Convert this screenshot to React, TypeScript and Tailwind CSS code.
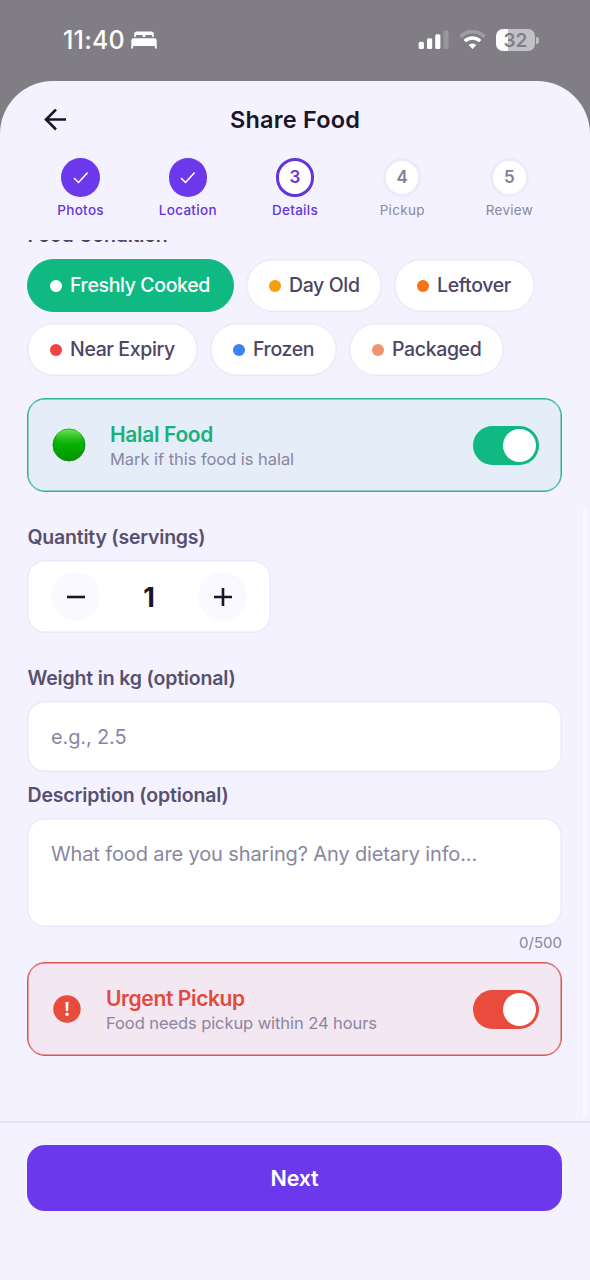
import { useState } from "react";

type Step = {
  label: string;
  state: "done" | "current" | "todo";
};

type Condition = {
  id: string;
  label: string;
  dot: string;
  width: string;
};

const steps: Step[] = [
  { label: "Photos", state: "done" },
  { label: "Location", state: "done" },
  { label: "Details", state: "current" },
  { label: "Pickup", state: "todo" },
  { label: "Review", state: "todo" }
];

const conditions: Condition[] = [
  { id: "fresh", label: "Freshly Cooked", dot: "bg-[#10b981]", width: "w-[207px]" },
  { id: "day-old", label: "Day Old", dot: "bg-[#f59e0b]", width: "w-[136px]" },
  { id: "leftover", label: "Leftover", dot: "bg-[#f97316]", width: "w-[141px]" },
  { id: "near-expiry", label: "Near Expiry", dot: "bg-[#ef4444]", width: "w-[171px]" },
  { id: "frozen", label: "Frozen", dot: "bg-[#3b82f6]", width: "w-[127px]" },
  { id: "packaged", label: "Packaged", dot: "bg-[#f0946f]", width: "w-[155px]" }
];

function StatusBar() {
  return (
    <div className="flex h-[81px] items-start justify-between pl-[63px] pr-[51px] pt-[26px] text-white">
      <div className="flex h-7 items-center">
        <span className="w-[68px] whitespace-nowrap pt-[2px] text-[25px] font-medium tracking-[0.2px]">11:40</span>
        <svg width="26" height="18" viewBox="0 0 26 18" fill="currentColor">
          <path d="M3.2 6V3a2.6 2.6 0 0 1 2.6-2.6h14.4A2.6 2.6 0 0 1 22.8 3v3h-1.6V5a1.2 1.2 0 0 0-1.2-1.1h-4.6a1.2 1.2 0 0 0-1.2 1.2V6h-2.4v-.9a1.2 1.2 0 0 0-1.2-1.2H6A1.2 1.2 0 0 0 4.8 5v1z" />
          <path d="M2.8 7.2h20.4A2.5 2.5 0 0 1 25.7 9.7v7.1a.9.9 0 0 1-1.8 0V15H2.1v1.8a.9.9 0 0 1-1.8 0V9.7A2.5 2.5 0 0 1 2.8 7.2z" />
        </svg>
      </div>
      <div className="flex h-7 items-center">
        <svg className="mr-[10px]" width="31" height="20" viewBox="0 0 31 20" fill="currentColor">
          <rect x="0.7" y="11.7" width="5.2" height="7.3" rx="1.5" />
          <rect x="9" y="8.3" width="5.2" height="10.7" rx="1.5" />
          <rect x="17.2" y="4.2" width="5.2" height="14.8" rx="1.5" />
          <rect x="25.4" y="0.4" width="5.2" height="18.6" rx="1.5" opacity="0.2" />
        </svg>
        <svg className="mr-[10px]" width="27" height="20" viewBox="0 0 27 20" fill="none" stroke="currentColor" strokeWidth="3.4">
          <path d="M1.5 6.7a17 17 0 0 1 24 0" opacity="0.25" />
          <path d="M5.8 11.1a11 11 0 0 1 15.4 0" />
          <path d="M9.6 15a5.6 5.6 0 0 1 7.8 0L13.5 18.9z" fill="currentColor" stroke="none" />
        </svg>
        <div className="flex h-[22px] w-[39px] items-center justify-center rounded-[7px] bg-[linear-gradient(90deg,#fff_0_12px,#c1c0c5_12px)] text-[19px] font-semibold leading-none text-[#807e84]">
          32
        </div>
        <div className="ml-px h-[7px] w-[3px] rounded-r-full bg-[#c1c0c5]" />
      </div>
    </div>
  );
}

function StepItem({ step, index }: { step: Step; index: number }) {
  const tone =
    step.state === "done"
      ? "bg-[#6c38ec] text-white"
      : step.state === "current"
        ? "border-[3px] border-[#6435da] bg-white text-[#6435da]"
        : "border-[3px] border-[#edeafb] bg-white text-[#827d98]";

  return (
    <div className="flex flex-1 flex-col items-center">
      <div className={`flex size-[38.5px] items-center justify-center rounded-full text-[17px] font-semibold ${tone}`}>
        {step.state === "done" ? (
          <svg width="16" height="13" viewBox="0 0 16 13" fill="none" stroke="currentColor" strokeWidth="1.6" strokeLinecap="round" strokeLinejoin="round">
            <path d="M1.5 7.5l4 4L14.2 2" />
          </svg>
        ) : (
          index + 1
        )}
      </div>
      <span
        className={`mt-[3px] whitespace-nowrap text-[13.5px] leading-[20px] tracking-[0.3px] ${
          step.state === "todo" ? "text-[#8a86a0]" : "font-medium text-[#6435da]"
        }`}
      >
        {step.label}
      </span>
    </div>
  );
}

function Toggle({ on, color, onToggle }: { on: boolean; color: string; onToggle: () => void }) {
  return (
    <button
      type="button"
      role="switch"
      aria-checked={on}
      onClick={onToggle}
      className={`flex h-[39px] w-[66px] items-center rounded-full px-[3px] ${on ? `justify-end ${color}` : "justify-start bg-gray-300"}`}
    >
      <span className="size-[33px] rounded-full bg-white" />
    </button>
  );
}

export default function App() {
  const [condition, setCondition] = useState("fresh");
  const [halal, setHalal] = useState(true);
  const [urgent, setUrgent] = useState(true);
  const [quantity, setQuantity] = useState(1);
  const [weight, setWeight] = useState("");
  const [description, setDescription] = useState("");

  return (
    <div className="h-[1280px] w-[590px] overflow-hidden bg-[#807e84] font-['Inter',sans-serif]">
      <StatusBar />
      <div className="relative flex h-[1199px] flex-col rounded-t-[53px] bg-[#f4f2ff]">
        <header className="grid h-[77px] shrink-0 grid-cols-[60px_1fr_60px] items-center px-[27px]">
          <button type="button" aria-label="Back" className="pl-[17px] text-[#1a1528]">
            <svg width="23" height="22" viewBox="0 0 23 22" fill="none" stroke="currentColor" strokeWidth="2.6">
              <path d="M12 0.5L2 10.5l10 10M2 10.5h20" />
            </svg>
          </button>
          <h1 className="text-center text-[23.5px] font-semibold tracking-[0.2px] text-[#1a1528]">Share Food</h1>
        </header>

        <div className="flex h-[82px] shrink-0 px-[27px]">
          {steps.map((step, index) => (
            <StepItem key={step.label} step={step} index={index} />
          ))}
        </div>

        <main className="h-[881px] shrink-0 overflow-hidden pl-[27px] pr-[28px]">
          <h2 className="-mt-[17px] h-[36px] pl-[0.5px] text-[19.5px] font-semibold leading-[24px] tracking-[-0.2px] text-[#4c4565]">Food Condition</h2>
          <div className="flex flex-wrap gap-x-[12px] gap-y-[11px]">
            {conditions.map((item) => {
              const selected = item.id === condition;
              return (
                <button
                  key={item.id}
                  type="button"
                  onClick={() => setCondition(item.id)}
                  className={`flex h-[53px] items-center gap-[8px] whitespace-nowrap rounded-full border pl-[22px] text-[19.5px] font-medium tracking-[-0.37px] ${item.width} ${
                    selected
                      ? "border-[#10b981] bg-[#10b981] text-white"
                      : "border-[#eae7f9] bg-white text-[#4c4565] shadow-[inset_0_0_0_0.5px_#eae7f9]"
                  }`}
                >
                  <span className={`size-[12px] rounded-full ${selected ? "bg-white" : item.dot}`} />
                  {item.label}
                </button>
              );
            })}
          </div>

          <section className="mt-[22px] flex h-[94px] items-center rounded-[18px] border border-[#2bb58a] bg-[#e5edf8] pl-[24px] pr-[22px] shadow-[inset_0_0_0_0.5px_#2bb58a]">
            <svg width="34" height="34" viewBox="0 0 34 34">
              <defs>
                <linearGradient id="halalBody" x1="0" y1="0" x2="0" y2="1">
                  <stop offset="0" stopColor="#2cc420" />
                  <stop offset="0.5" stopColor="#06b000" />
                  <stop offset="1" stopColor="#079000" />
                </linearGradient>
                <linearGradient id="halalShine" x1="0" y1="0" x2="0" y2="1">
                  <stop offset="0" stopColor="#6be455" />
                  <stop offset="1" stopColor="#19b80e" stopOpacity="0" />
                </linearGradient>
              </defs>
              <circle cx="17" cy="17" r="16" fill="url(#halalBody)" stroke="#14911a" strokeWidth="1" />
              <ellipse cx="17" cy="9.5" rx="13" ry="8" fill="url(#halalShine)" />
            </svg>
            <div className="ml-[24px] flex-1">
              <h3 className="text-[21px] font-semibold leading-[27px] tracking-[-0.33px] text-[#18b17e]">Halal Food</h3>
              <p className="text-[16.5px] leading-[22px] tracking-[-0.05px] text-[#8a86a0]">Mark if this food is halal</p>
            </div>
            <Toggle on={halal} color="bg-[#10b981]" onToggle={() => setHalal(!halal)} />
          </section>

          <h2 className="mt-[33px] pl-[0.5px] text-[19.5px] font-semibold leading-[24px] tracking-[-0.22px] text-[#57506f]">Quantity (servings)</h2>
          <div className="mt-[11px] flex h-[73px] w-[244px] items-center justify-between rounded-[18px] border border-[#eae7f9] bg-white px-[23px] text-[#1a1528] shadow-[inset_0_0_0_0.5px_#eae7f9]">
            <button
              type="button"
              aria-label="Fewer servings"
              onClick={() => setQuantity(Math.max(1, quantity - 1))}
              className="flex size-[49px] items-center justify-center rounded-full bg-[#faf9ff]"
            >
              <svg width="20" height="20" viewBox="0 0 20 20" stroke="currentColor" strokeWidth="2.6">
                <path d="M1 10h18" />
              </svg>
            </button>
            <span className="pt-px text-[27px] font-bold leading-none">{quantity}</span>
            <button
              type="button"
              aria-label="More servings"
              onClick={() => setQuantity(quantity + 1)}
              className="flex size-[49px] items-center justify-center rounded-full bg-[#faf9ff]"
            >
              <svg width="20" height="20" viewBox="0 0 20 20" stroke="currentColor" strokeWidth="2.6">
                <path d="M1 10h18M10 1v18" />
              </svg>
            </button>
          </div>

          <h2 className="mt-[33px] pl-[0.5px] text-[19.5px] font-semibold leading-[24px] tracking-[-0.17px] text-[#57506f]">Weight in kg (optional)</h2>
          <input
            value={weight}
            onChange={(e) => setWeight(e.target.value)}
            placeholder="e.g., 2.5"
            className="mt-[11px] block h-[71px] w-full rounded-[18px] border border-[#eae7f9] bg-white px-[23px] text-[20px] tracking-[-0.13px] text-[#1a1528] shadow-[inset_0_0_0_0.5px_#eae7f9] outline-none placeholder:text-[#8a86a0]"
          />

          <h2 className="mt-[11px] pl-[0.5px] text-[19.5px] font-semibold leading-[24px] tracking-[-0.15px] text-[#57506f]">Description (optional)</h2>
          <textarea
            value={description}
            maxLength={500}
            onChange={(e) => setDescription(e.target.value)}
            placeholder="What food are you sharing? Any dietary info..."
            className="mt-[11px] block h-[109px] w-full resize-none rounded-[18px] border border-[#eae7f9] bg-white px-[23px] pt-[21px] text-[20px] leading-[28px] tracking-[-0.13px] text-[#1a1528] shadow-[inset_0_0_0_0.5px_#eae7f9] outline-none placeholder:text-[#8a86a0]"
          />
          <p className="mt-[6px] text-right text-[15px] leading-[20px] text-[#8a86a0]">{description.length}/500</p>

          <section className="mt-[9px] flex h-[94px] items-center rounded-[18px] border border-[#dd554e] bg-[#f3e7f2] pl-[25px] pr-[22px] shadow-[inset_0_0_0_0.5px_#dd554e]">
            <svg width="28" height="28" viewBox="0 0 28 28">
              <circle cx="14" cy="14" r="13.7" fill="#e94b3c" />
              <path d="M12.5 7h3l-.4 9h-2.2z" fill="#fff" />
              <circle cx="14" cy="19.3" r="1.7" fill="#fff" />
            </svg>
            <div className="ml-[25px] flex-1">
              <h3 className="text-[21px] font-semibold leading-[27px] tracking-[-0.37px] text-[#e14a3e]">Urgent Pickup</h3>
              <p className="text-[16.5px] leading-[22px] tracking-[-0.08px] text-[#8a86a0]">Food needs pickup within 24 hours</p>
            </div>
            <Toggle on={urgent} color="bg-[#e94b3c]" onToggle={() => setUrgent(!urgent)} />
          </section>
        </main>

        {/* scroll indicator */}
        <div className="absolute right-[3px] top-[427px] h-[609px] w-[4px] rounded-full bg-[#faf9ff]" />

        <footer className="flex-1 border-t-2 border-[#e5e1f7] pl-[27px] pr-[28px] pt-[22px]">
          <button type="button" className="h-[66px] w-full rounded-[18px] bg-[#6c38ec] text-[21.5px] font-semibold tracking-[-0.2px] text-white">
            Next
          </button>
        </footer>
      </div>
    </div>
  );
}
